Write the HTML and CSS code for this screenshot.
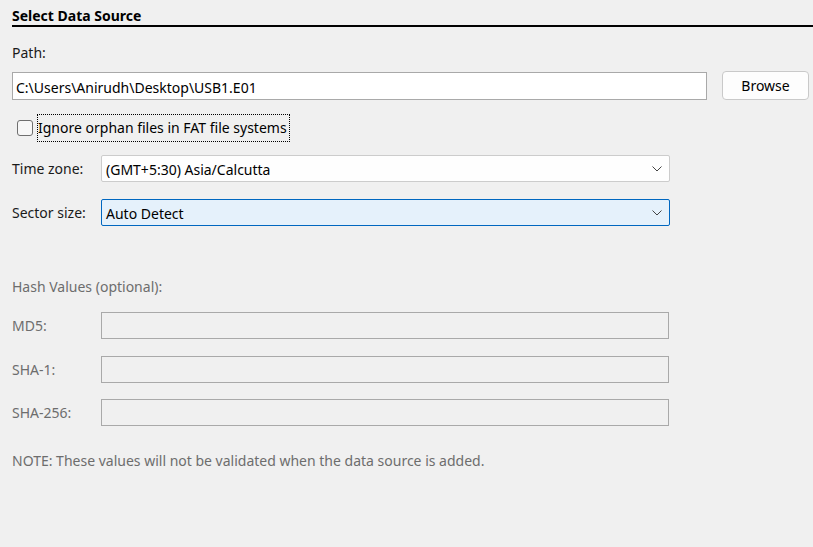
FILE: index.html
```html
<!DOCTYPE html>
<html>
<head>
<meta charset="utf-8">
<link rel="stylesheet" href="styles.css">
</head>
<body>
<div class="panel">
  <div class="title">Select Data Source</div>
  <div class="label path-label">Path:</div>
  <div class="path-row">
    <div class="input path-input">C:\Users\Anirudh\Desktop\USB1.E01</div>
    <div class="button">Browse</div>
  </div>
  <div class="check-row">
    <span class="checkbox"></span>
    <span class="check-label">Ignore orphan files in FAT file systems</span>
  </div>
  <div class="form-row tz-row">
    <span class="label row-label">Time zone:</span>
    <div class="select">
      <span>(GMT+5:30) Asia/Calcutta</span>
      <svg class="chev" width="10" height="6" viewBox="0 0 10 6"><path d="M0.5 0.5 L5 5 L9.5 0.5" fill="none" stroke="#444" stroke-width="1"/></svg>
    </div>
  </div>
  <div class="form-row sector-row">
    <span class="label row-label">Sector size:</span>
    <div class="select select-focus">
      <span>Auto Detect</span>
      <svg class="chev" width="10" height="6" viewBox="0 0 10 6"><path d="M0.5 0.5 L5 5 L9.5 0.5" fill="none" stroke="#444" stroke-width="1"/></svg>
    </div>
  </div>
  <div class="label disabled hash-label">Hash Values (optional):</div>
  <div class="form-row hash-row md5">
    <span class="label row-label disabled">MD5:</span>
    <div class="hash-input"></div>
  </div>
  <div class="form-row hash-row">
    <span class="label row-label disabled">SHA-1:</span>
    <div class="hash-input"></div>
  </div>
  <div class="form-row hash-row sha256">
    <span class="label row-label disabled">SHA-256:</span>
    <div class="hash-input"></div>
  </div>
  <div class="label disabled note">NOTE: These values will not be validated when the data source is added.</div>
</div>
</body>
</html>
```
FILE: styles.css
```css
html, body {
  margin: 0;
  padding: 0;
  background: #f0f0f0;
  width: 813px;
  height: 547px;
  overflow: hidden;
}
body {
  font-family: "Noto Sans", "Open Sans", sans-serif;
  font-size: 14px;
  color: #1a1a1a;
}
.panel {
  padding-left: 12px;
  padding-top: 6px;
}
.title {
  font-weight: bold;
  font-size: 14px;
  line-height: 19px;
  height: 19px;
  border-bottom: 2px solid #000;
  color: #000;
}
.label {
  line-height: 20px;
}
.path-label {
  margin-top: 16px;
  height: 20px;
}
.path-row {
  display: flex;
  align-items: center;
  margin-top: 8px;
  height: 29px;
}
.input {
  box-sizing: border-box;
  background: #fff;
  border: 1px solid #a9a9a9;
  height: 28px;
  line-height: 27px;
  padding-top: 1px;
  padding-left: 3px;
}
.path-input {
  width: 695px;
  color: #000;
}
.button {
  box-sizing: border-box;
  margin-left: 15px;
  width: 87px;
  height: 29px;
  border: 1px solid #c9c9c9;
  border-radius: 4px;
  background: #fdfdfd;
  text-align: center;
  line-height: 27px;
  color: #000;
}
.check-row {
  display: flex;
  align-items: center;
  margin-top: 14px;
  height: 28px;
}
.checkbox {
  box-sizing: border-box;
  width: 16px;
  height: 16px;
  margin-left: 5px;
  border: 1px solid #6f6f6f;
  border-radius: 3px;
  background: #f7f7f7;
}
.check-label {
  margin-left: 5px;
  outline: 1px dotted #000;
  line-height: 26px;
  height: 26px;
  padding-right: 2px;
  color: #000;
}
.form-row {
  display: flex;
  align-items: center;
}
.row-label {
  width: 89px;
  flex: none;
  padding-top: 1px;
}
.tz-row {
  margin-top: 13px;
  height: 27px;
}
.sector-row {
  margin-top: 17px;
  height: 27px;
}
.select {
  box-sizing: border-box;
  width: 569px;
  height: 27px;
  border: 1px solid #cccccc;
  border-radius: 2px;
  background: #fefefe;
  display: flex;
  align-items: center;
  justify-content: space-between;
  padding: 1px 7px 0 4px;
  color: #000;
}
.select-focus {
  background: #e5f1fb;
  border-color: #0067c0;
}
.chev {
  display: block;
}
.disabled {
  color: #6d6d6d;
}
.hash-label {
  margin-top: 51px;
  height: 20px;
}
.hash-row {
  height: 27px;
  margin-top: 17px;
}
.md5 {
  margin-top: 15px;
}
.sha256 {
  margin-top: 16px;
}
.hash-input {
  box-sizing: border-box;
  width: 568px;
  height: 27px;
  border: 1px solid #a9a9a9;
  background: #f0f0f0;
}
.note {
  margin-top: 25px;
}
```
